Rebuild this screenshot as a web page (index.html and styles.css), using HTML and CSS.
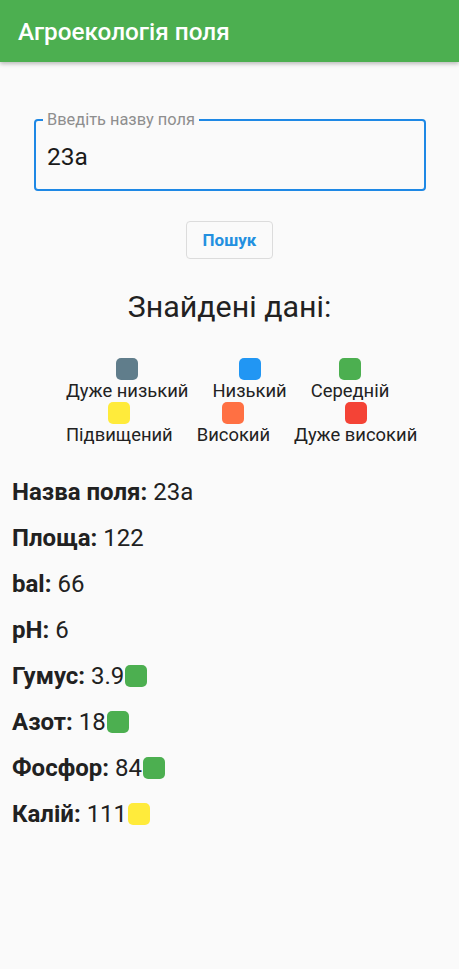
FILE: index.html
```html
<!DOCTYPE html>
<html lang="uk">
<head>
<meta charset="utf-8">
<link rel="stylesheet" href="styles.css">
</head>
<body>
<header class="appbar"><h1 class="appbar-title">Агроекологія поля</h1></header>
<main class="content">
  <div class="field">
    <span class="field-label">Введіть назву поля</span>
    <div class="field-value">23а</div>
  </div>
  <div class="btn-row"><button class="btn">Пошук</button></div>
  <h2 class="heading">Знайдені дані:</h2>
  <div class="legend">
    <div class="legend-item"><span class="sq c-vlow"></span><span class="legend-text">Дуже низький</span></div>
    <div class="legend-item"><span class="sq c-low"></span><span class="legend-text">Низький</span></div>
    <div class="legend-item"><span class="sq c-mid"></span><span class="legend-text">Середній</span></div>
    <div class="legend-item"><span class="sq c-elev"></span><span class="legend-text">Підвищений</span></div>
    <div class="legend-item"><span class="sq c-high"></span><span class="legend-text">Високий</span></div>
    <div class="legend-item"><span class="sq c-vhigh"></span><span class="legend-text">Дуже високий</span></div>
  </div>
  <div class="data">
    <div class="row"><b>Назва поля:</b>&nbsp;23а</div>
    <div class="row"><b>Площа:</b>&nbsp;122</div>
    <div class="row"><b>bal:</b>&nbsp;66</div>
    <div class="row"><b>pH:</b>&nbsp;6</div>
    <div class="row"><b>Гумус:</b>&nbsp;3.9<span class="sq c-mid"></span></div>
    <div class="row"><b>Азот:</b>&nbsp;18<span class="sq c-mid"></span></div>
    <div class="row"><b>Фосфор:</b>&nbsp;84<span class="sq c-mid"></span></div>
    <div class="row"><b>Калій:</b>&nbsp;111<span class="sq c-elev"></span></div>
  </div>
</main>
</body>
</html>
```
FILE: styles.css
```css
html, body {
  margin: 0;
  padding: 0;
  background: #fafafa;
  font-family: Roboto, "Noto Sans", sans-serif;
  color: #212121;
}
.appbar {
  height: 62px;
  background: #4caf50;
  display: flex;
  align-items: center;
  padding-left: 18px;
  box-shadow: 0 2px 4px rgba(0,0,0,0.25);
}
.appbar-title {
  margin: 0;
  color: #fff;
  font-size: 24.3px;
  font-weight: 500;
  padding-top: 1px;
}
.content {
  padding: 57px 0 0;
}
.field {
  position: relative;
  margin: 0 33px 0 34px;
  height: 68px;
  border: 2px solid #1e88e5;
  border-radius: 4px;
  display: flex;
  align-items: center;
  padding-left: 11px;
}
.field-label {
  position: absolute;
  top: -11px;
  left: 7px;
  padding: 0 4px;
  background: #fafafa;
  color: #8e8e8e;
  font-size: 16.4px;
  line-height: 19px;
}
.field-value {
  font-size: 24.5px;
  color: #1a1a1a;
  padding-top: 2px;
}
.btn-row {
  display: flex;
  justify-content: center;
  margin-top: 30px;
}
.btn {
  width: 87px;
  height: 38px;
  border: 1px solid #dcdcdc;
  border-radius: 4px;
  background: #fafafa;
  color: #2390e0;
  font-family: Roboto, sans-serif;
  font-weight: 700;
  font-size: 17px;
  padding: 0;
}
.heading {
  margin: 28px 0 0;
  text-align: center;
  font-weight: 400;
  font-size: 30.4px;
  line-height: 40px;
  color: #212121;
}
.legend {
  display: flex;
  flex-wrap: wrap;
  column-gap: 24px;
  width: 370px;
  margin: 31px 0 0 66px;
}
.legend-item {
  display: flex;
  flex-direction: column;
  align-items: center;
}
.legend-text {
  font-size: 18.4px;
  line-height: 22px;
  color: #222;
}
.sq {
  display: inline-block;
  width: 22px;
  height: 22px;
  border-radius: 5px;
}
.c-vlow { background: #607d8b; }
.c-low { background: #2196f3; }
.c-mid { background: #4caf50; }
.c-elev { background: #ffeb3b; }
.c-high { background: #ff7043; }
.c-vhigh { background: #f44336; }
.data {
  margin-top: 23px;
  padding-left: 12px;
}
.row {
  display: flex;
  align-items: center;
  height: 46px;
  font-size: 24px;
  color: #212121;
}
.row b { font-weight: 700; }
.row .sq { margin-left: 1px; }
```
